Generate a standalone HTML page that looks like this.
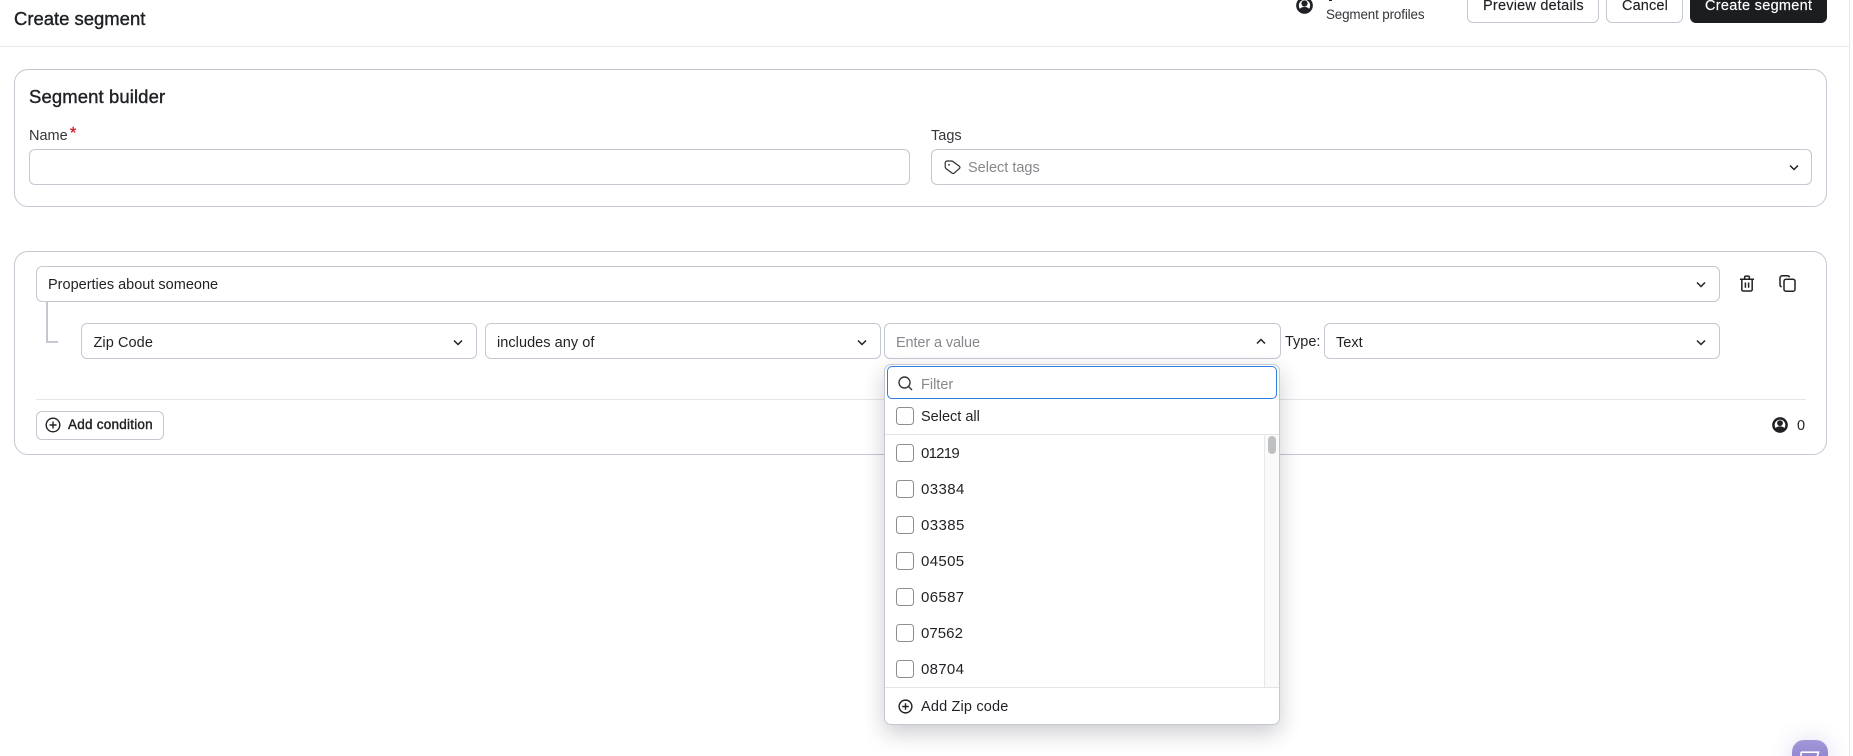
<!DOCTYPE html>
<html><head><meta charset="utf-8"><title>Create segment</title>
<style>
html,body{margin:0;padding:0;background:#fff;width:1853px;height:756px;overflow:hidden}
body{position:relative;font-family:"Liberation Sans",Arial,sans-serif;font-size:14.5px;color:#1f2124}
.a{position:absolute;box-sizing:border-box}
.t{position:absolute;white-space:nowrap;letter-spacing:0;margin-top:1px}
.b{position:absolute;box-sizing:border-box;background:#fff;border:1px solid #c4c8d0;border-radius:6px}
.m{-webkit-text-stroke:.4px currentColor;margin-top:0}
.s{-webkit-text-stroke:.15px currentColor}
.d{font-size:15px}
.cb{position:absolute;box-sizing:border-box;left:896px;width:18px;height:18px;border:1px solid #8c8e91;border-radius:3.5px;background:#fff}
.g{color:#85888c}
svg{position:absolute;overflow:visible}
</style></head><body>

<!-- header -->
<div class="t m" style="left:14px;top:9px;font-size:18.5px;line-height:20px;letter-spacing:-.02px">Create segment</div>
<div class="a" style="left:0;top:46px;width:1849px;height:1px;background:#e8e9eb"></div>
<svg style="left:1296px;top:-3px" width="17" height="17" viewBox="0 0 17 17"><circle cx="8.500" cy="8.500" r="7" fill="#fff" stroke="#1f2124" stroke-width="2.700"/><circle cx="8.500" cy="6.500" r="3.100" fill="#1f2124"/><path d="M3 13.200c1.200-2.500 3.200-3.200 5.500-3.200s4.300.7 5.500 3.200l-2 2.300h-7z" fill="#1f2124"/></svg>
<div class="a" style="left:1329px;top:0;width:3px;height:1px;background:#1f2124"></div>
<div class="t" style="left:1326px;top:7px;margin-top:0;font-size:13.4px;line-height:16px;color:#33363a;letter-spacing:-.13px">Segment profiles</div>
<div class="b" style="left:1467px;top:-13px;width:132px;height:36px"></div>
<div class="t s" style="left:1483px;top:-3px;line-height:16px;letter-spacing:.22px">Preview details</div>
<div class="b" style="left:1606px;top:-13px;width:77px;height:36px"></div>
<div class="t s" style="left:1622px;top:-3px;line-height:16px;letter-spacing:.13px">Cancel</div>
<div class="a" style="left:1690px;top:-13px;width:137px;height:36px;background:#1c1d1f;border-radius:6px"></div>
<div class="t s" style="left:1705px;top:-3px;line-height:16px;color:#fff;letter-spacing:.3px">Create segment</div>

<!-- right edge -->
<div class="a" style="left:1849px;top:0;width:4px;height:756px;background:#fdfdfd;border-left:1px solid #e6e7e9"></div>

<!-- card 1 -->
<div class="b" style="left:14px;top:69px;width:1813px;height:138px;border-radius:14px"></div>
<div class="t m" style="left:29px;top:87px;font-size:18.5px;line-height:20px;letter-spacing:.1px">Segment builder</div>
<div class="t" style="left:29px;top:127px;line-height:16px;color:#33363a">Name</div>
<div class="t m" style="left:70px;top:126px;line-height:16px;color:#d0202e;font-size:16px">*</div>
<div class="b" style="left:29px;top:149px;width:881px;height:36px"></div>
<div class="t" style="left:931px;top:127px;line-height:16px;color:#33363a">Tags</div>
<div class="b" style="left:931px;top:149px;width:881px;height:36px"></div>
<svg style="left:944px;top:160px" width="18" height="15" viewBox="0 0 18 15"><path d="M1.200 3a2 2 0 0 1 2-2h4.200a2.500 2.500 0 0 1 1.500.5l6.600 4.900a1.300 1.300 0 0 1 0 2l-5.300 4.700a1.600 1.600 0 0 1-2.100 0L2 8.600A2.500 2.500 0 0 1 1.200 6.800z" fill="none" stroke="#2b2d30" stroke-width="1.200" stroke-linejoin="round"/><circle cx="5" cy="4.800" r=".9" fill="#2b2d30"/></svg>
<div class="t g" style="left:968px;top:159px;line-height:16px">Select tags</div>
<svg style="left:1789px;top:164px" width="10" height="7" viewBox="0 0 10 7"><path d="M1 1.500l4 4 4-4" fill="none" stroke="#1f2124" stroke-width="1.500"/></svg>

<!-- card 2 -->
<div class="b" style="left:14px;top:251px;width:1813px;height:204px;border-radius:14px"></div>
<div class="a" style="left:46px;top:300px;width:12px;height:43px;border-left:2px solid #c4c8d0;border-bottom:2px solid #c4c8d0"></div>
<div class="b" style="left:36px;top:266px;width:1684px;height:36px"></div>
<div class="t" style="left:48px;top:276px;line-height:16px">Properties about someone</div>
<svg style="left:1696px;top:281px" width="10" height="7" viewBox="0 0 10 7"><path d="M1 1.500l4 4 4-4" fill="none" stroke="#1f2124" stroke-width="1.500"/></svg>
<!-- trash -->
<svg style="left:1739px;top:275px" width="16" height="17" viewBox="0 0 17 18" fill="none" stroke="#1f2124" stroke-width="1.600"><path d="M1 4.500h15M3 4.500v11a1.500 1.500 0 0 0 1.500 1.500h8a1.500 1.500 0 0 0 1.500-1.500v-11M6 4.500V2.500a1.300 1.300 0 0 1 1.300-1.300h2.400A1.300 1.300 0 0 1 11 2.500v2M6.800 8v5.500M10.200 8v5.500"/></svg>
<!-- copy -->
<svg style="left:1778.500px;top:275px" width="17" height="17" viewBox="0 0 17 17" fill="none" stroke="#1f2124" stroke-width="1.500"><rect x="5" y="4.200" width="11" height="12" rx="2"/><path d="M2.700 11.800C1.500 11.500 1 10.700 1 9.700V3a2.200 2.200 0 0 1 2.200-2.200h5c1.200 0 2 .6 2.300 1.500"/></svg>

<div class="b" style="left:81px;top:323px;width:396px;height:36px"></div>
<div class="t" style="left:93.500px;top:334px;line-height:16px;letter-spacing:.08px">Zip Code</div>
<svg style="left:453px;top:339px" width="10" height="7" viewBox="0 0 10 7"><path d="M1 1.500l4 4 4-4" fill="none" stroke="#1f2124" stroke-width="1.500"/></svg>
<div class="b" style="left:485px;top:323px;width:396px;height:36px"></div>
<div class="t" style="left:497px;top:334px;line-height:16px;letter-spacing:.05px">includes any of</div>
<svg style="left:857px;top:339px" width="10" height="7" viewBox="0 0 10 7"><path d="M1 1.500l4 4 4-4" fill="none" stroke="#1f2124" stroke-width="1.500"/></svg>
<div class="b" style="left:884px;top:323px;width:397px;height:36px"></div>
<div class="t g" style="left:896px;top:334px;line-height:16px;letter-spacing:-.12px">Enter a value</div>
<svg style="left:1256px;top:338px" width="10" height="7" viewBox="0 0 10 7"><path d="M1 5.500l4-4 4 4" fill="none" stroke="#1f2124" stroke-width="1.500"/></svg>
<div class="t" style="left:1285px;top:333px;line-height:16px">Type:</div>
<div class="b" style="left:1324px;top:323px;width:396px;height:36px"></div>
<div class="t" style="left:1336px;top:334px;line-height:16px">Text</div>
<svg style="left:1696px;top:339px" width="10" height="7" viewBox="0 0 10 7"><path d="M1 1.500l4 4 4-4" fill="none" stroke="#1f2124" stroke-width="1.500"/></svg>

<div class="a" style="left:36px;top:399px;width:1770px;height:1px;background:#e4e6e9"></div>
<div class="b" style="left:36px;top:411px;width:128px;height:29px"></div>
<svg style="left:45px;top:417px" width="16" height="16" viewBox="0 0 16 16" fill="none" stroke="#1f2124" stroke-width="1.400"><circle cx="8" cy="8" r="6.800"/><path d="M8 4.500v7M4.500 8h7"/></svg>
<div class="t m" style="left:68px;top:417px;font-size:13.5px;line-height:16px;letter-spacing:.24px">Add condition</div>
<svg style="left:1772px;top:417px" width="16" height="16" viewBox="0 0 17 17"><circle cx="8.500" cy="8.500" r="7" fill="#fff" stroke="#1f2124" stroke-width="2.700"/><circle cx="8.500" cy="6.500" r="3.100" fill="#1f2124"/><path d="M3 13.200c1.200-2.500 3.200-3.200 5.500-3.200s4.300.7 5.500 3.200l-2 2.300h-7z" fill="#1f2124"/></svg>
<div class="t" style="left:1797px;top:417px;line-height:16px">0</div>

<!-- popup -->
<div class="b" style="left:884px;top:364px;width:396px;height:361px;box-shadow:0 8px 22px rgba(20,25,40,.22);border-radius:7px"></div>
<div class="a" style="left:887px;top:366px;width:390px;height:33px;border:1.500px solid #2f7de1;border-radius:5px;background:#fff"></div>
<svg style="left:898px;top:376px" width="15" height="15" viewBox="0 0 15 15" fill="none" stroke="#33363a" stroke-width="1.400"><circle cx="6.500" cy="6.500" r="5.500"/><path d="M10.500 10.500l3.500 3.500"/></svg>
<div class="t g" style="left:921px;top:376px;line-height:16px">Filter</div>
<div class="cb" style="top:407px"></div>
<div class="t" style="left:921px;top:408px;line-height:16px">Select all</div>
<div class="a" style="left:885px;top:434px;width:394px;height:1px;background:#e3e5e8"></div>
<div class="a" style="left:1264px;top:435px;width:15px;height:252px;background:#fafafa;border-left:1px solid #e6e7e9"></div>
<div class="a" style="left:1268px;top:436px;width:8px;height:18px;background:#bfc0c2;border-radius:4px"></div>
<div class="cb" style="top:444px"></div><div class="t d" style="left:921px;top:445px;line-height:16px;letter-spacing:-.75px">01219</div>
<div class="cb" style="top:480px"></div><div class="t d" style="left:921px;top:481px;line-height:16px;letter-spacing:.4px">03384</div>
<div class="cb" style="top:516px"></div><div class="t d" style="left:921px;top:517px;line-height:16px;letter-spacing:.4px">03385</div>
<div class="cb" style="top:552px"></div><div class="t d" style="left:921px;top:553px;line-height:16px;letter-spacing:.35px">04505</div>
<div class="cb" style="top:588px"></div><div class="t d" style="left:921px;top:589px;line-height:16px;letter-spacing:.35px">06587</div>
<div class="cb" style="top:624px"></div><div class="t d" style="left:921px;top:625px;line-height:16px;letter-spacing:.05px">07562</div>
<div class="cb" style="top:660px"></div><div class="t d" style="left:921px;top:661px;line-height:16px;letter-spacing:.3px">08704</div>
<div class="a" style="left:885px;top:687px;width:394px;height:1px;background:#e3e5e8"></div>
<svg style="left:898px;top:699px" width="15" height="15" viewBox="0 0 16 16" fill="none" stroke="#1f2124" stroke-width="1.500"><circle cx="8" cy="8" r="6.800"/><path d="M8 4.500v7M4.500 8h7"/></svg>
<div class="t" style="left:921px;top:698px;line-height:16px;letter-spacing:.17px">Add Zip code</div>

<!-- chat bubble -->
<div class="a" style="left:1792px;top:740px;width:36px;height:36px;border-radius:12px;background:linear-gradient(#a297d8,#8378c8);box-shadow:0 0 22px rgba(110,95,200,.22)"></div>
<svg style="left:1800px;top:751px" width="20" height="8" viewBox="0 0 20 8"><path d="M1 1.200h17.500L16.500 8M1 1.200V8" fill="none" stroke="#fff" stroke-width="1.600"/></svg>
</body></html>
